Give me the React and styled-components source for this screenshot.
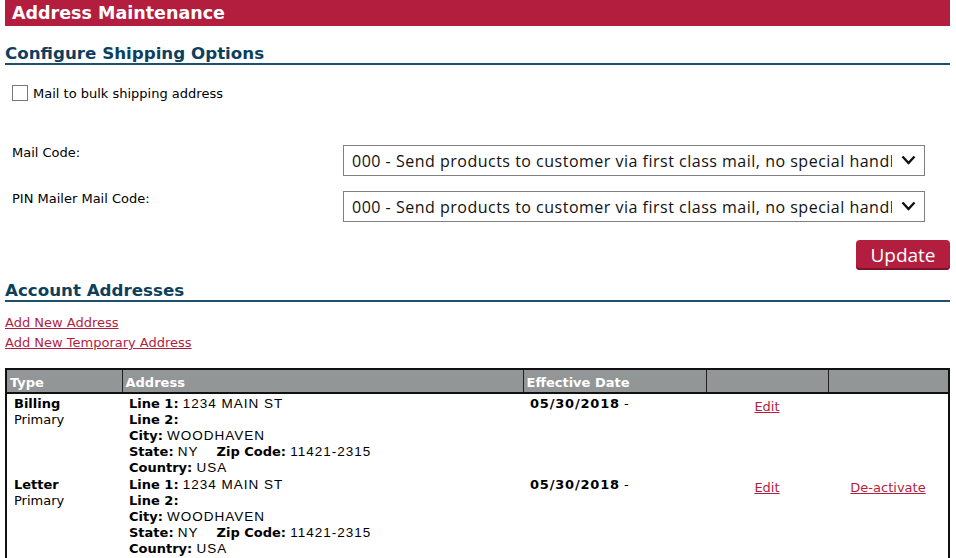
import React from "react";
import styled, {createGlobalStyle} from "styled-components";

const GlobalStyle = createGlobalStyle`
  body {
    margin: 0;
    background: #fff;
    font-family: "DejaVu Sans", Verdana, sans-serif;
    font-size: 13px;
    color: #000;
  }
`;

const Page = styled.div`
  width: 945px;
  padding: 0 6px 0 5px;
`;

const TitleBar = styled.div`
  height: 26px;
  background: #b31e3f;
  color: #fff;
  font-weight: bold;
  font-size: 17.5px;
  line-height: 27px;
  padding-left: 7px;
`;

const SectionHeading = styled.h2`
  margin: ${props => props.$top}px 0 0 0;
  padding-bottom: 0;
  border-bottom: 2px solid #1f4f6d;
  color: #0d3f5e;
  font-size: 16.7px;
  line-height: 20px;
  font-weight: bold;
`;

const CheckRow = styled.label`
  display: flex;
  align-items: center;
  gap: 5px;
  margin: 20px 0 0 7px;
  font-size: 13px;
`;

const Box = styled.span`
  width: 16px;
  height: 16px;
  border: 1px solid #777;
  background: #fff;
  box-sizing: border-box;
`;

const FieldRow = styled.div`
  display: flex;
  align-items: center;
  justify-content: space-between;
  margin-top: ${props => props.$top}px;
  padding: 0 25px 0 7px;
`;

const FieldLabel = styled.span`
  font-size: 13px;
  align-self: flex-start;
  padding-top: ${props => props.$pad}px;
`;

const SelectWrap = styled.div`
  position: relative;
  width: 582px;
  height: 31px;
`;

const Select = styled.select`
  appearance: none;
  width: 100%;
  height: 100%;
  border: 1px solid #7f7f7f;
  border-radius: 0;
  background: #fff;
  padding: 0 32px 0 8px;
  font-family: "Open Sans", "Liberation Sans", sans-serif;
  font-size: 16px;
  letter-spacing: 0.5px;
  color: #111;
  outline: none;
`;

const Chevron = styled.svg`
  position: absolute;
  right: 9px;
  top: 10px;
  pointer-events: none;
`;

const ButtonRow = styled.div`
  display: flex;
  justify-content: flex-end;
  margin-top: 18px;
`;

const UpdateButton = styled.button`
  width: 94px;
  height: 30px;
  background: #b31e3f;
  color: #fff;
  border: none;
  border-radius: 4px;
  box-shadow: inset 0 -2px 0 #7e1229;
  font-family: "Open Sans", "DejaVu Sans", sans-serif;
  font-size: 19px;
  line-height: 28px;
  padding: 0;
`;

const Links = styled.div`
  display: flex;
  flex-direction: column;
  gap: 4px;
  margin-top: 13px;
`;

const RedLink = styled.a`
  color: #b31e3f;
  text-decoration: underline;
  font-size: 13px;
  line-height: 16px;
  cursor: pointer;
`;

const Table = styled.table`
  margin-top: 17px;
  width: 945px;
  border-collapse: collapse;
  border: 2px solid #111;
  border-bottom: none;
  table-layout: fixed;
`;

const Th = styled.th`
  background: #939696;
  color: #fff;
  text-align: left;
  font-size: 13px;
  font-weight: bold;
  height: 20px;
  padding: 2px 3px 0;
  border: 1px solid #222;
  border-bottom: 2px solid #111;
`;

const Td = styled.td`
  vertical-align: top;
  padding: ${props => (props.$first ? 2 : 0) + (props.$center ? 3 : 0)}px 7px 1px;
  text-align: ${props => props.$center ? "center" : "left"};
  font-size: 13px;
  line-height: 16px;
`;

const Strong = styled.span`
  font-weight: bold;
`;

const DateText = styled.span`
  font-weight: bold;
  letter-spacing: 0.8px;
`;

const Value = styled.span`
  font-family: "Liberation Sans", Arial, sans-serif;
  font-size: 13.5px;
  letter-spacing: 1px;
`;

const Gap = styled.span`
  display: inline-block;
  width: ${props => props.$w}px;
`;

const rows = [
    {type: "Billing", deactivate: false},
    {type: "Letter", deactivate: true},
];

const option = "000 - Send products to customer via first class mail, no special handling";

const SelectField = () => (
    <SelectWrap>
        <Select defaultValue={option}>
            <option>{option}</option>
        </Select>
        <Chevron width="15" height="10" viewBox="0 0 15 10">
            <path d="M1.5 1.5 L7.5 8 L13.5 1.5" fill="none" stroke="#111" strokeWidth="2.4"/>
        </Chevron>
    </SelectWrap>
);

export default function App() {
    return (
        <>
            <GlobalStyle/>
            <Page>
                <TitleBar>Address Maintenance</TitleBar>
                <SectionHeading $top={17}>Configure Shipping Options</SectionHeading>
                <CheckRow>
                    <Box/>
                    Mail to bulk shipping address
                </CheckRow>
                <FieldRow $top={44}>
                    <FieldLabel $pad={0}>Mail Code:</FieldLabel>
                    <SelectField/>
                </FieldRow>
                <FieldRow $top={15}>
                    <FieldLabel $pad={0}>PIN Mailer Mail Code:</FieldLabel>
                    <SelectField/>
                </FieldRow>
                <ButtonRow>
                    <UpdateButton>Update</UpdateButton>
                </ButtonRow>
                <SectionHeading $top={10}>Account Addresses</SectionHeading>
                <Links>
                    <RedLink>Add New Address</RedLink>
                    <RedLink>Add New Temporary Address</RedLink>
                </Links>
                <Table>
                    <colgroup>
                        <col style={{width: 116}}/>
                        <col style={{width: 401}}/>
                        <col style={{width: 183}}/>
                        <col style={{width: 122}}/>
                        <col/>
                    </colgroup>
                    <thead>
                    <tr>
                        <Th>Type</Th>
                        <Th>Address</Th>
                        <Th>Effective Date</Th>
                        <Th/>
                        <Th/>
                    </tr>
                    </thead>
                    <tbody>
                    {rows.map((r, i) => (
                        <tr key={r.type}>
                            <Td $first={i === 0}>
                                <Strong>{r.type}</Strong><br/>Primary
                            </Td>
                            <Td $first={i === 0}>
                                <Strong>Line 1:</Strong> <Value>1234 MAIN ST</Value><br/>
                                <Strong>Line 2:</Strong><br/>
                                <Strong>City:</Strong> <Value>WOODHAVEN</Value><br/>
                                <Strong>State:</Strong> <Value>NY</Value><Gap $w={18}/>
                                <Strong>Zip Code:</Strong> <Value>11421-2315</Value><br/>
                                <Strong>Country:</Strong> <Value>USA</Value>
                            </Td>
                            <Td $first={i === 0}>
                                <DateText>05/30/2018</DateText> -
                            </Td>
                            <Td $first={i === 0} $center>
                                <RedLink>Edit</RedLink>
                            </Td>
                            <Td $first={i === 0} $center>
                                {r.deactivate && <RedLink>De-activate</RedLink>}
                            </Td>
                        </tr>
                    ))}
                    </tbody>
                </Table>
            </Page>
        </>
    );
}
